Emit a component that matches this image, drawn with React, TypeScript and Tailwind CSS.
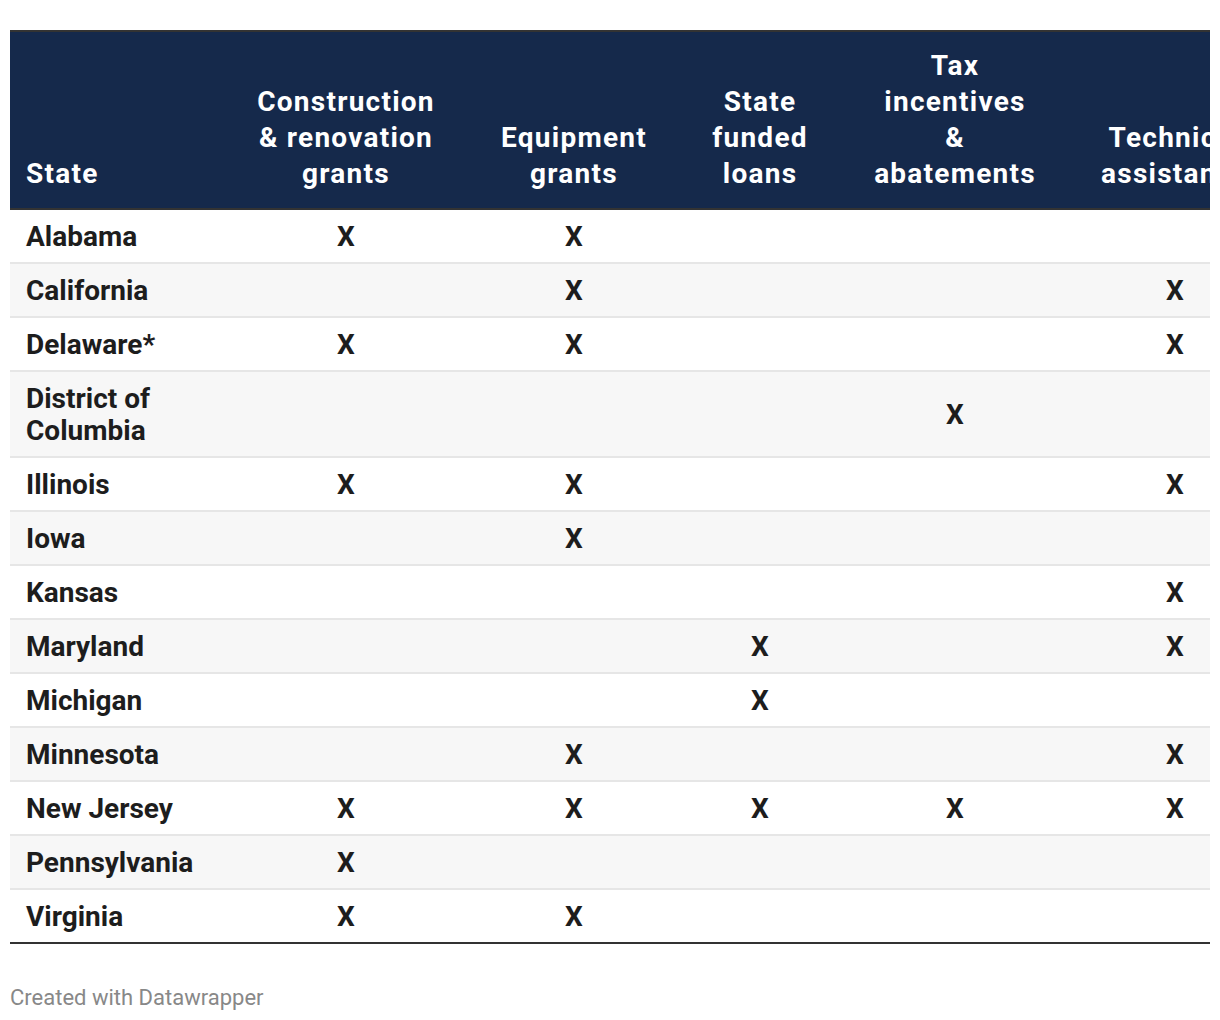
import React from "react"

const cols = [227, 218, 238, 134, 256, 184]

const headers: string[][] = [
    ["State"],
    ["Construction", "& renovation", "grants"],
    ["Equipment", "grants"],
    ["State", "funded", "loans"],
    ["Tax", "incentives", "&", "abatements"],
    ["Technical", "assistance"],
]

const rows: [string[], string[]][] = [
    [["Alabama"], ["X", "X", "", "", ""]],
    [["California"], ["", "X", "", "", "X"]],
    [["Delaware*"], ["X", "X", "", "", "X"]],
    [["District of", "Columbia"], ["", "", "", "X", ""]],
    [["Illinois"], ["X", "X", "", "", "X"]],
    [["Iowa"], ["", "X", "", "", ""]],
    [["Kansas"], ["", "", "", "", "X"]],
    [["Maryland"], ["", "", "X", "", "X"]],
    [["Michigan"], ["", "", "X", "", ""]],
    [["Minnesota"], ["", "X", "", "", "X"]],
    [["New Jersey"], ["X", "X", "X", "X", "X"]],
    [["Pennsylvania"], ["X", "", "", "", ""]],
    [["Virginia"], ["X", "X", "", "", ""]],
]

function Lines({ parts }: { parts: string[] }) {
    return (
        <>
            {parts.map((p, i) => (
                <React.Fragment key={i}>
                    {i > 0 && <br />}
                    {p}
                </React.Fragment>
            ))}
        </>
    )
}

export default function App() {
    return (
        <main className="min-h-screen bg-white px-[10px] pt-[30px] font-['Roboto',sans-serif]">
            <div className="w-[1200px] overflow-hidden">
                <table className="table-fixed border-collapse w-[1257px]">
                    <colgroup>
                        {cols.map((w, i) => (
                            <col key={i} style={{ width: w }} />
                        ))}
                    </colgroup>
                    <thead>
                        <tr className="bg-[#15294b] border-t-2 border-b-2 border-[#333333]">
                            {headers.map((h, i) => (
                                <th
                                    key={i}
                                    className={
                                        i === 0
                                            ? "align-bottom text-left pl-4 pt-[16px] pb-[16px] text-[28px] leading-[36px] tracking-[1.25px] font-bold text-white whitespace-nowrap"
                                            : "align-bottom text-center px-2 pt-[16px] pb-[16px] text-[28px] leading-[36px] tracking-[1.25px] font-bold text-white whitespace-nowrap"
                                    }
                                >
                                    <Lines parts={h} />
                                </th>
                            ))}
                        </tr>
                    </thead>
                    <tbody>
                        {rows.map(([state, marks], r) => (
                            <tr
                                key={r}
                                className={
                                    (r % 2 === 1 ? "bg-[#f7f7f7] " : "bg-white ") +
                                    (r === rows.length - 1
                                        ? "border-b-2 border-[#333333]"
                                        : "border-b-2 border-[#e6e6e6]")
                                }
                            >
                                <td className="pl-4 pr-2 pt-[11px] pb-[9px] text-left text-[28px] leading-[32px] font-bold text-[#1d1d1d] align-middle whitespace-nowrap">
                                    <Lines parts={state} />
                                </td>
                                {marks.map((m, i) => (
                                    <td
                                        key={i}
                                        className="px-2 pt-[11px] pb-[9px] text-center text-[28px] leading-[32px] font-bold text-[#1d1d1d] align-middle"
                                    >
                                        {m}
                                    </td>
                                ))}
                            </tr>
                        ))}
                    </tbody>
                </table>
            </div>
            <p className="mt-[40px] text-[22px] leading-[28px] text-[#888888]">Created with Datawrapper</p>
        </main>
    )
}
